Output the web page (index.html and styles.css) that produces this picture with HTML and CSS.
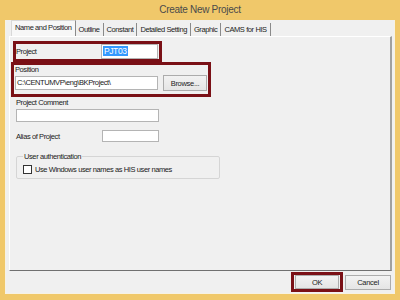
FILE: index.html
```html
<!DOCTYPE html>
<html lang="en">
<head>
  <meta charset="UTF-8" />
  <title>Create New Project</title>
  <link rel="stylesheet" href="styles.css">
</head>
<body>
  <div class="window">
    <div class="titlebar">Create New Project</div>

    <div class="client">
      <div class="tabs">
        <div class="tab active">Name and Position</div>
        <div class="tab">Outline</div>
        <div class="tab">Constant</div>
        <div class="tab">Detailed Setting</div>
        <div class="tab">Graphic</div>
        <div class="tab">CAMS for HIS</div>
      </div>

      <div class="panel">
        <div class="mark mark-project">
          <span>Project</span>
          <div class="field field-short"><span class="selected">PJT03</span></div>
        </div>

        <div class="mark mark-position">
          <div class="label">Position</div>
          <div class="row">
            <div class="field field-long">C:\CENTUMVP\eng\BKProject\</div>
            <button class="btn btn-browse">Browse...</button>
          </div>
        </div>

        <div class="label label-comment">Project Comment</div>
        <div class="field field-long field-comment"></div>

        <div class="alias">
          <span>Alias of Project</span>
          <div class="field field-short"></div>
        </div>

        <fieldset class="group">
          <legend>User authentication</legend>
          <label class="check"><span class="box"></span>Use Windows user names as HIS user names</label>
        </fieldset>
      </div>

      <div class="buttons">
        <div class="mark mark-ok"><button class="btn">OK</button></div>
        <button class="btn btn-cancel">Cancel</button>
      </div>
    </div>
  </div>
</body>
</html>
```

FILE: styles.css
```css
body {
  margin: 0;
  background: #f0c86a;
  font-family: 'Liberation Sans', sans-serif;
  font-size: 7.5px;
  letter-spacing: -0.4px;
  color: #1a1a1a;
}
.window {
  width: 400px;
  height: 300px;
  display: flex;
  flex-direction: column;
}
.titlebar {
  height: 20px;
  line-height: 20px;
  text-align: center;
  font-size: 10px;
  letter-spacing: -0.3px;
  color: #4a4a4a;
}
.client {
  flex: 1;
  margin: 0 5px 6px 5px;
  background: #f0f0f0;
  border: 1px solid #f7f2e4;
  border-top: none;
  display: flex;
  flex-direction: column;
}
.tabs {
  display: flex;
  align-items: flex-end;
  height: 15px;
  padding-left: 5px;
  margin-top: 1px;
}
.tab {
  height: 13px;
  line-height: 13px;
  padding: 0 3px;
  border-right: 1px solid #8a8a8a;
  color: #222;
}
.tab.active {
  height: 15px;
  line-height: 14px;
  background: #f7f7f7;
  border: 1px solid #d8d8d8;
  border-bottom: none;
  border-right: 1px solid #8a8a8a;
  padding: 0 3px;
}
.panel {
  height: 235px;
  margin: 0 2px 0 3px;
  border: 1px solid #fff;
  border-right: 2px solid #a0a0a0;
  border-bottom: 1px solid #707070;
  box-sizing: border-box;
  padding: 4px 0 0 1px;
}
.mark {
  border: 3px solid #7a1016;
  box-sizing: border-box;
}
.mark-project {
  width: 149px;
  height: 21px;
  margin-left: 2px;
  display: flex;
  align-items: center;
  justify-content: space-between;
  padding-right: 1px;
}
.mark-position {
  width: 200px;
  height: 35px;
  padding-left: 1px;
}
.field {
  background: #fff;
  border: 1px solid #b4b4b4;
  box-sizing: border-box;
  height: 15px;
  line-height: 13px;
  padding-left: 1px;
  white-space: nowrap;
  overflow: hidden;
}
.field-short {
  width: 57px;
}
.field-long {
  width: 143px;
  height: 14px;
  line-height: 12px;
}
.selected {
  background: #3399ff;
  color: #fff;
  padding: 0 1px;
  font-size: 8.5px;
}
.label {
  height: 10px;
  line-height: 10px;
}
.row {
  display: flex;
  align-items: center;
  gap: 5px;
}
.btn {
  font-family: inherit;
  font-size: 7.5px;
  letter-spacing: -0.3px;
  color: #222;
  background: linear-gradient(#f2f2f2, #e5e5e5);
  border: 1px solid #acacac;
  padding: 0;
  height: 16px;
}
.btn-browse {
  width: 44px;
}
.label-comment {
  margin: 1px 0 0 5px;
  height: 11px;
}
.field-comment {
  margin-left: 5px;
  height: 13px;
}
.alias {
  display: flex;
  align-items: center;
  justify-content: space-between;
  width: 143px;
  margin: 8px 0 0 5px;
}
.alias .field {
  height: 12px;
}
.group {
  width: 204px;
  height: 27px;
  box-sizing: border-box;
  margin: 10px 0 0 5px;
  padding: 4px 0 0 6px;
  border: 1px solid #d5d5d5;
  border-radius: 2px;
}
.group legend {
  padding: 0 1px;
  color: #222;
}
.check {
  display: flex;
  align-items: center;
  gap: 3px;
}
.box {
  width: 7px;
  height: 7px;
  background: #fff;
  border: 1px solid #333;
}
.buttons {
  display: flex;
  justify-content: flex-end;
  align-items: center;
  gap: 2px;
  padding: 1px 3px 0 0;
}
.mark-ok {
  width: 52px;
  height: 20px;
  padding: 0 1px;
}
.mark-ok .btn {
  width: 100%;
  height: 14px;
}
.btn-cancel {
  width: 46px;
  height: 15px;
}
```
